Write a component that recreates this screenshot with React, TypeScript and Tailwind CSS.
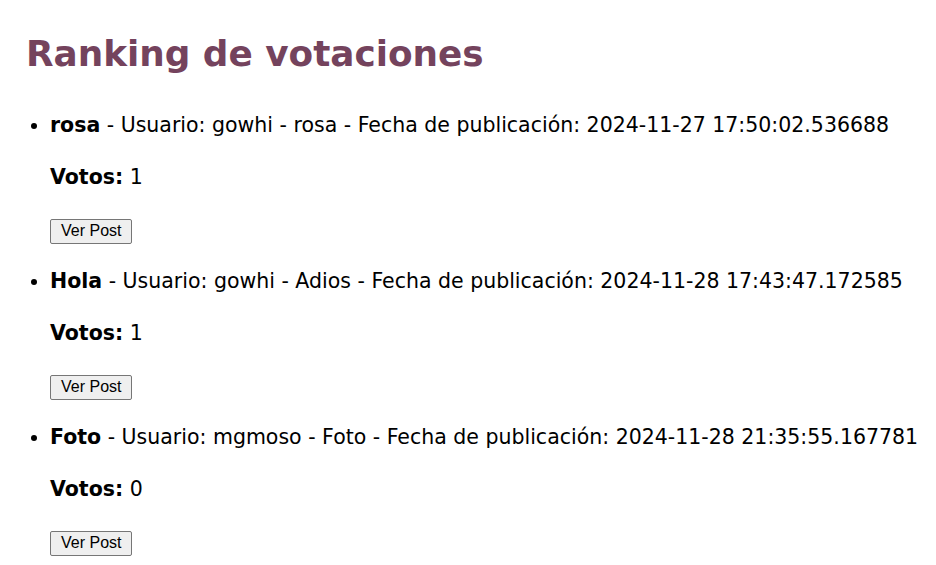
const posts = [
  {
    titulo: "rosa",
    usuario: "gowhi",
    contenido: "rosa",
    fecha: "2024-11-27 17:50:02.536688",
    votos: 1,
  },
  {
    titulo: "Hola",
    usuario: "gowhi",
    contenido: "Adios",
    fecha: "2024-11-28 17:43:47.172585",
    votos: 1,
  },
  {
    titulo: "Foto",
    usuario: "mgmoso",
    contenido: "Foto",
    fecha: "2024-11-28 21:35:55.167781",
    votos: 0,
  },
];

export default function App() {
  return (
    <div className="min-h-screen bg-white pl-[26px] pt-[30px] font-['DejaVu_Sans',Verdana,sans-serif] text-black">
      <h1 className="text-[35.8px] font-bold leading-[48px] text-[#74435d]">
        Ranking de votaciones
      </h1>

      <ul className="mt-[33px] list-disc pl-[24px] text-[20.5px] leading-[28px]">
        {posts.map((post, index) => (
          <li key={index} className="mb-[23px] whitespace-nowrap">
            <strong>{post.titulo}</strong> - Usuario: {post.usuario} -{" "}
            {post.contenido} - Fecha de publicación: {post.fecha}
            <p className="mt-[24px]">
              <strong>Votos:</strong> {post.votos}
            </p>
            <button className="mt-[28px] block rounded-[2px] border border-[#767676] bg-[#efefef] px-[10px] pt-[2px] pb-[3px] font-['Liberation_Sans',Arial,sans-serif] text-[16px] leading-[18px]">
              Ver Post
            </button>
          </li>
        ))}
      </ul>
    </div>
  );
}
